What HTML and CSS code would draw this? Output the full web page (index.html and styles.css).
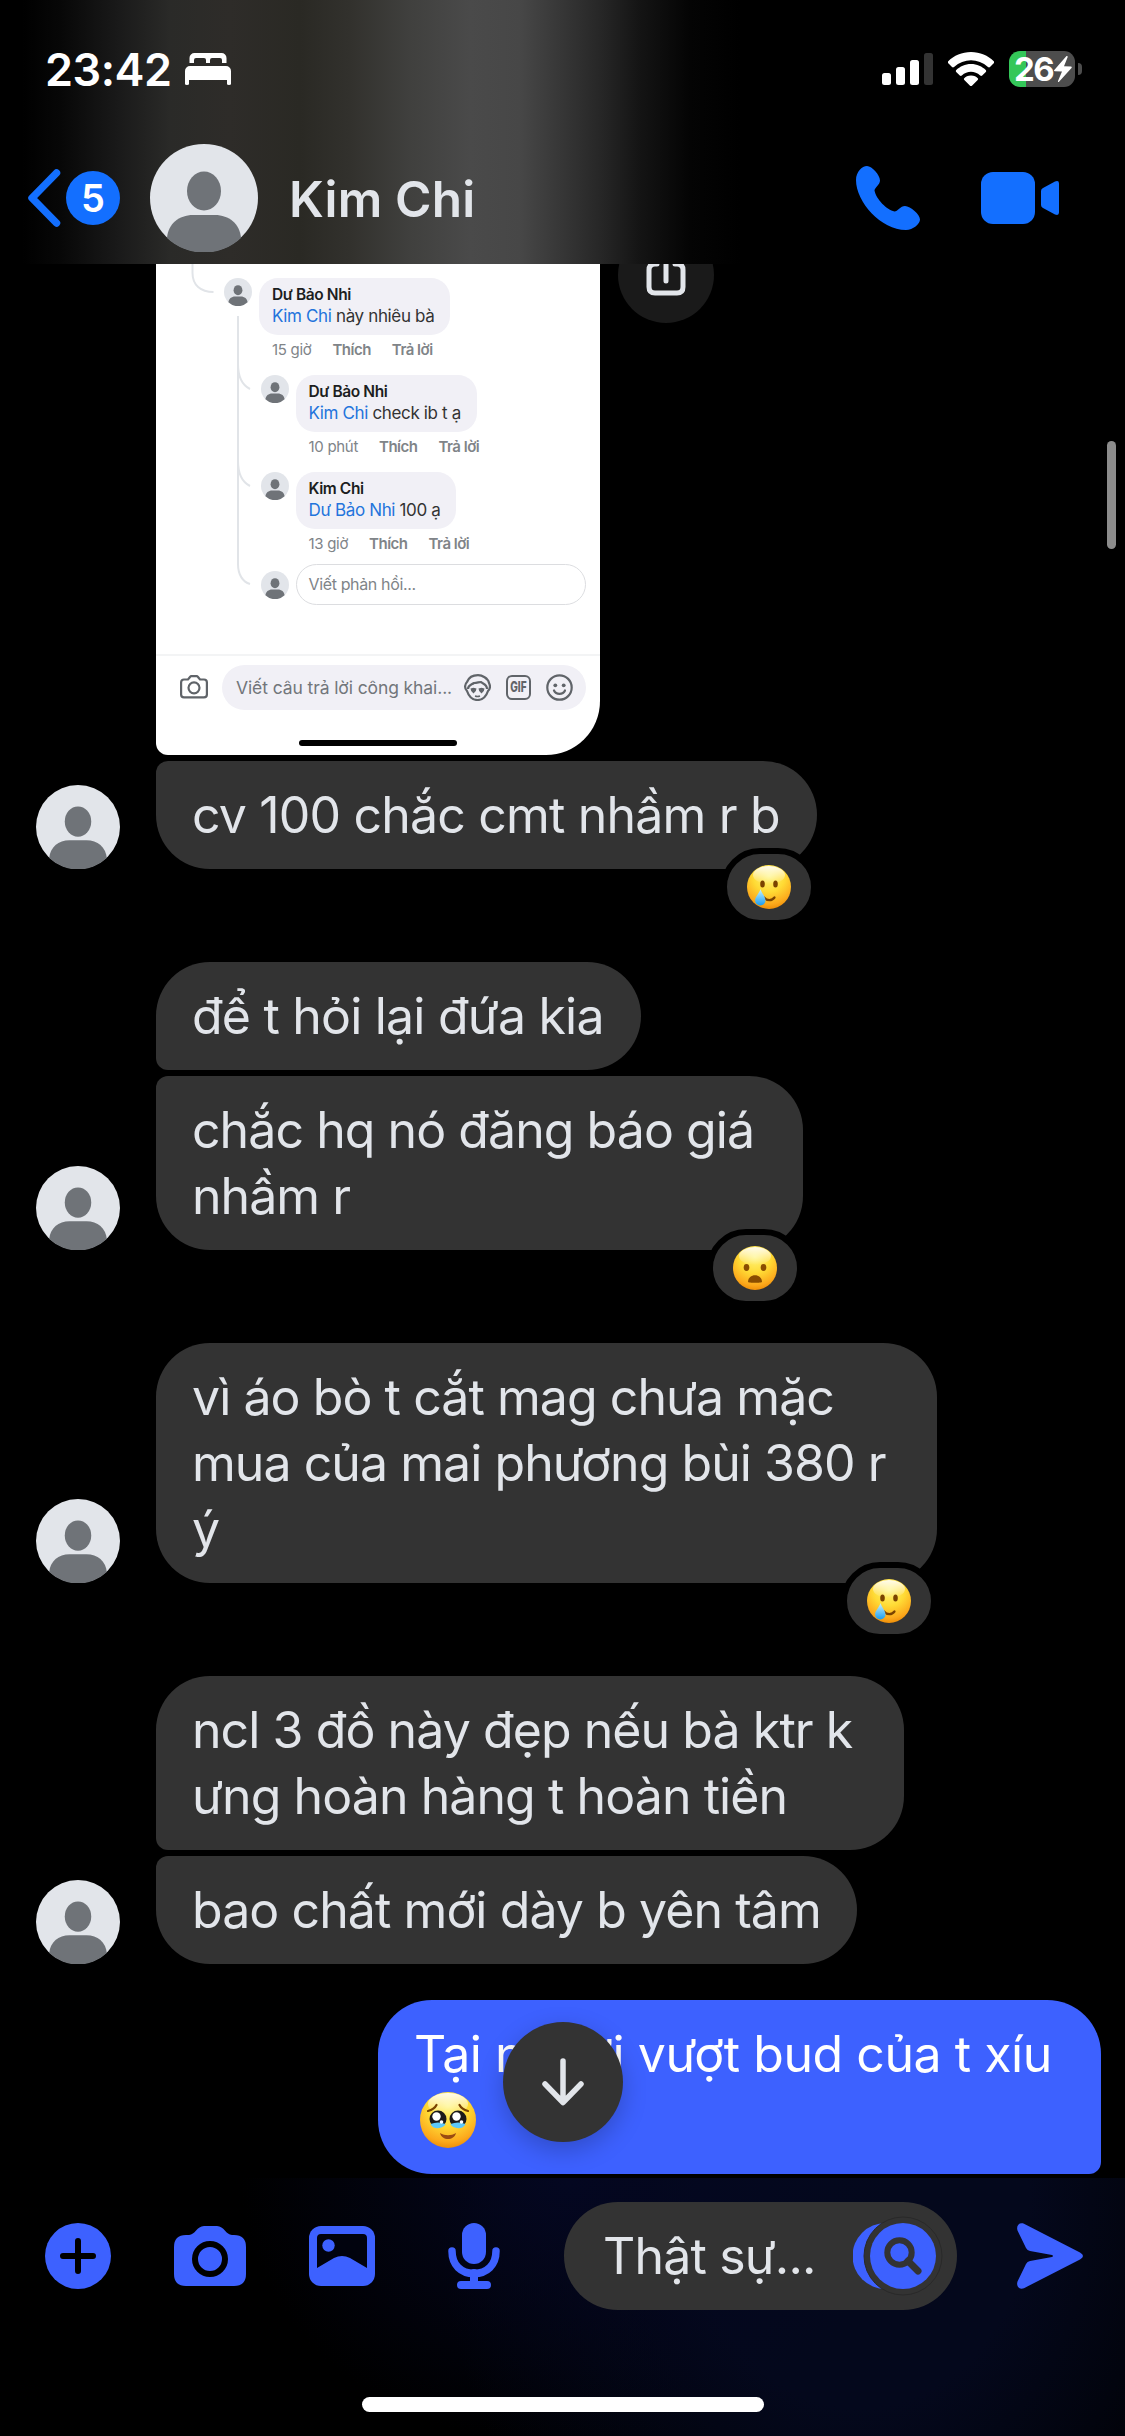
FILE: index.html
```
<!DOCTYPE html>
<html lang="vi">
<head>
<meta charset="utf-8">
<title>Kim Chi</title>
<link rel="stylesheet" href="styles.css">
</head>
<body>
<svg class="defs" width="0" height="0">
  <defs>
    <radialGradient id="face" cx=".5" cy=".25" r=".8">
      <stop offset="0" stop-color="#fff47a"/><stop offset=".45" stop-color="#ffdb35"/><stop offset=".8" stop-color="#fca91c"/><stop offset="1" stop-color="#e98300"/>
    </radialGradient>
    <linearGradient id="shine" x1="0" y1="0" x2="0" y2="1">
      <stop offset="0" stop-color="#fff" stop-opacity=".9"/><stop offset="1" stop-color="#fff" stop-opacity="0"/>
    </linearGradient>
    <linearGradient id="tear" x1="0" y1="0" x2="0" y2="1">
      <stop offset="0" stop-color="#c9f3ff"/><stop offset="1" stop-color="#1a9df0"/>
    </linearGradient>
    <symbol id="person" viewBox="0 0 108 108">
      <circle cx="54" cy="54" r="54" fill="#e2e5ea"/>
      <ellipse cx="54" cy="47" rx="17" ry="19.5" fill="#6f7378"/>
      <path d="M17 94C18 80 29 71 43 71h22c14 0 25 9 26 23A54 54 0 0 1 17 94Z" fill="#6f7378"/>
    </symbol>
    <symbol id="tearface" viewBox="0 0 44 44">
      <circle cx="22" cy="22" r="22" fill="url(#face)"/>
      <ellipse cx="22" cy="10" rx="16" ry="9" fill="url(#shine)"/>
      <ellipse cx="15.500" cy="19" rx="2.300" ry="3.600" fill="#7a4300"/>
      <ellipse cx="28.500" cy="19" rx="2.300" ry="3.600" fill="#7a4300"/>
      <path d="M17 32.500c3 3.500 8 3.500 10.500 0" fill="none" stroke="#7a4300" stroke-width="2.200" stroke-linecap="round"/>
      <path d="M13.500 24c1.500 5 5 7.500 5 11.500a5.200 5 0 0 1-10.400 0C8.100 31.500 12 29 13.500 24Z" fill="url(#tear)"/>
    </symbol>
    <symbol id="frown" viewBox="0 0 44 44">
      <circle cx="22" cy="22" r="22" fill="url(#face)"/>
      <ellipse cx="22" cy="10" rx="16" ry="9" fill="url(#shine)"/>
      <ellipse cx="13.500" cy="21.500" rx="2.800" ry="3.400" fill="#8a4d00"/>
      <ellipse cx="30.500" cy="21.500" rx="2.800" ry="3.400" fill="#8a4d00"/>
      <path d="M15 36c0-9 14-9 14 0c0 1-14 1-14 0Z" fill="#8a4d00"/>
    </symbol>
    <symbol id="holdback" viewBox="0 0 56 56">
      <circle cx="28" cy="28" r="28" fill="url(#face)"/>
      <ellipse cx="28" cy="12" rx="20" ry="11" fill="url(#shine)"/>
      <path d="M8 19c4-1 7-3 8.500-6M48 19c-4-1-7-3-8.500-6" fill="none" stroke="#7a4300" stroke-width="2.200" stroke-linecap="round"/>
      <circle cx="18" cy="27" r="8.500" fill="#1c1a1a"/><circle cx="38" cy="27" r="8.500" fill="#1c1a1a"/>
      <path d="M10.500 32c5-2 10-2 15 0c-2 5-13 6-15 0ZM30.500 32c5-2 10-2 15 0c-2 6-13 5-15 0Z" fill="#5cc8fa"/>
      <circle cx="16.500" cy="24.500" r="4.200" fill="#fff"/><circle cx="36.500" cy="24.500" r="4.200" fill="#fff"/>
      <circle cx="21.500" cy="30" r="1.800" fill="#fff"/><circle cx="41.500" cy="30" r="1.800" fill="#fff"/>
      <path d="M20 41c5 3 11 3 16 0c-2 8-14 8-16 0Z" fill="#9a4a12"/>
    </symbol>
  </defs>
</svg>

<header class="top">
  <div class="status">
    <div class="status-left">
      <span class="time">23:42</span>
      <svg width="46" height="32" viewBox="0 0 46 32" fill="#fff"><path d="M4.500 10V5a5 5 0 0 1 5-5h27a5 5 0 0 1 5 5v5H37V7a2 2 0 0 0-2-2h-8a2 2 0 0 0-2 2v3h-4V7a2 2 0 0 0-2-2h-8a2 2 0 0 0-2 2v3Z"/><path d="M0 18a5 5 0 0 1 5-5h36a5 5 0 0 1 5 5v13q0 1-2 1t-2-1v-4H4v4q0 1-2 1t-2-1Z"/></svg>
    </div>
    <div class="status-right">
      <svg width="51" height="32" viewBox="0 0 51 32" fill="#fff"><rect y="20" width="9" height="12" rx="2.500"/><rect x="14" y="14" width="9" height="18" rx="2.500"/><rect x="28" y="7" width="9" height="25" rx="2.500"/><rect x="42" width="9" height="32" rx="2.500" fill="#333"/></svg>
      <svg width="46" height="34" viewBox="0 0 46 34" fill="#fff"><path d="M23 0C32 0 40 3.500 46 9.500q.5 1-.3 1.800L42 15q-1 .8-2 0C30 6 16 6 6 15q-1 .8-2 0L.3 11.300Q-.5 10.500 0 9.500C6 3.500 14 0 23 0Z"/><path d="M23 12c6 0 11 2.500 15 6.200q.5 1-.2 1.800l-3.600 3.500q-1 .8-2 0c-5.500-5-13-5-18.400 0q-1 .8-2 0L8.200 20q-.7-.8-.2-1.800C12 14.500 17 12 23 12Z"/><path d="M23 23.500c3 0 5.500 1.200 7 3q.3.900-.3 1.600l-5.500 5.400q-1.200 1-2.400 0l-5.500-5.400q-.6-.7-.3-1.600c1.500-1.800 4-3 7-3Z"/></svg>
      <div class="battery"><span class="charge">26</span>
        <svg width="18" height="26" viewBox="0 0 18 26" fill="#fff"><path d="M12.500 0 .3 14q-.8 1.200.5 1.300L8 15.500 4 25q-.2 1.500 1 .8L17.500 12q.8-1.300-.6-1.500L10 10.300 13.700 1Q13.500-.4 12.500 0Z"/></svg>
      </div>
      <i class="nub"></i>
    </div>
  </div>
  <div class="chat-head">
    <svg class="back" width="33" height="58" viewBox="0 0 33 58"><path d="M28.500 4 4 29l24.500 25" fill="none" stroke="#136fff" stroke-width="7.500" stroke-linecap="round" stroke-linejoin="round"/></svg>
    <span class="unread">5</span>
    <svg class="head-avatar" width="108" height="108"><use href="#person"/></svg>
    <h1 class="name">Kim Chi</h1>
    <svg class="phone" width="64" height="64" viewBox="0 0 64 64" fill="#136fff"><path d="M11 0c5 0 13 9 13 14.500 0 4-5.500 7.500-5.500 10C20 33 31 44 38.500 45.500c3 0 6-5.500 10.500-5.500 5.500 0 15 8.500 15 13.500C64 58 57 64 50 64 25 64 0 36 0 14 0 6 6 0 11 0Z"/></svg>
    <svg class="video" width="78" height="52" viewBox="0 0 78 52" fill="#136fff"><rect width="54" height="52" rx="12"/><path d="M60 19q0-2 2-3L74 9.500q4-1.500 4 2v29q0 3.500-4 2L62 36q-2-1-2-3Z"/></svg>
  </div>
</header>

<main class="thread">
  <div class="shot-row">
    <div class="shot">
      <div class="comments">
        <svg class="lines" width="160" height="392" viewBox="0 0 160 392" fill="none" stroke="#e1e4e8" stroke-width="2"><path d="M36.500 0v9c0 12 8 19 21 19M82 52v248c0 11 5 18 12 20M82 100c0 13 4 21 12 25M82 197c0 13 4 21 12 25"/></svg>
        <div class="comment first">
          <svg class="mini" width="28" height="28"><use href="#person"/></svg>
          <div><div class="cbub" style="width:190.500px"><b>Dư Bảo Nhi</b><p><em>Kim Chi</em> này nhiêu bà</p></div>
          <div class="acts"><span>15 giờ</span><strong>Thích</strong><strong>Trả lời</strong></div></div>
        </div>
        <div class="comment">
          <svg class="mini" width="28" height="28"><use href="#person"/></svg>
          <div><div class="cbub" style="width:181.500px"><b>Dư Bảo Nhi</b><p><em>Kim Chi</em> check ib t ạ</p></div>
          <div class="acts"><span>10 phút</span><strong>Thích</strong><strong>Trả lời</strong></div></div>
        </div>
        <div class="comment">
          <svg class="mini" width="28" height="28"><use href="#person"/></svg>
          <div><div class="cbub" style="width:160.500px"><b>Kim Chi</b><p><em>Dư Bảo Nhi</em> 100 ạ</p></div>
          <div class="acts"><span>13 giờ</span><strong>Thích</strong><strong>Trả lời</strong></div></div>
        </div>
        <div class="reply">
          <svg class="mini" width="28" height="28"><use href="#person"/></svg>
          <div class="reply-box">Viết phản hồi...</div>
        </div>
      </div>
      <div class="public">
        <svg width="28" height="24" viewBox="0 0 28 24" fill="none" stroke="#606469" stroke-width="2.200"><path d="M4 4.500h4L10 2q.5-.8 1.500-.8h5q1 0 1.500.8l2 2.500h4q2.900 0 2.900 2.900v12q0 2.900-2.900 2.900H4q-2.900 0-2.900-2.900v-12Q1.100 4.500 4 4.500Z"/><circle cx="14" cy="12.800" r="5.500"/></svg>
        <div class="public-box"><span>Viết câu trả lời công khai...</span>
          <svg width="27" height="27" viewBox="0 0 27 27" fill="none" stroke="#606469" stroke-width="2.200"><path d="M3 17C0 14 1 10 3 8 5 3 10 1.200 14 1.200S24 4 25 9c1.500 3 1 6-1 8-2 6-6 9-10.500 9S5 23 3 17Z"/><path d="M4 15c0-4 3-4 6-6 3 0 5-1 7-1 2 2 6 2 6 7" /><path d="m6.500 14.500 3-.8 3 .8q0 3-3 5-3-2-3-5Zm8 0 3-.8 3 .8q0 3-3 5-3-2-3-5Z" fill="#606469" stroke="none"/><path d="M11 22q2.500 1 5 0" stroke-width="1.500"/></svg>
          <span class="gif"><span>GIF</span></span>
          <svg width="27" height="27" viewBox="0 0 27 27" fill="none" stroke="#606469" stroke-width="2.200"><circle cx="13.500" cy="13.500" r="12.200"/><path d="M8 16.500c2 4.500 9 4.500 11 0" stroke-linecap="round"/><g fill="#606469" stroke="none"><circle cx="9.300" cy="11.300" r="1.900"/><circle cx="17.700" cy="11.300" r="1.900"/></g></svg>
        </div>
      </div>
      <i class="shot-home"></i>
    </div>
    <div class="share"><svg width="40" height="50" viewBox="0 0 40 50" fill="none" stroke="#e2e5ea" stroke-width="5" stroke-linecap="round"><path d="M11 17H9q-6 0-6 6v17q0 6 6 6h22q6 0 6-6V23q0-6-6-6h-2M20 34V5"/></svg></div>
  </div>

  <div class="row"><svg class="avatar" width="84" height="84"><use href="#person"/></svg>
    <div class="bubble join-top ls82" style="width:661px">cv 100 chắc cmt nhầm r b<span class="react"><svg width="44" height="44"><use href="#tearface"/></svg></span></div></div>
  <div class="row apart"><i class="avatar"></i>
    <div class="bubble join-bottom ls80" style="width:485px">để t hỏi lại đứa kia</div></div>
  <div class="row"><svg class="avatar" width="84" height="84"><use href="#person"/></svg>
    <div class="bubble join-top ls94" style="width:647px">chắc hq nó đăng báo giá<br>nhầm r<span class="react"><svg width="44" height="44"><use href="#frown"/></svg></span></div></div>
  <div class="row apart"><svg class="avatar" width="84" height="84"><use href="#person"/></svg>
    <div class="bubble ls94" style="width:781px">vì áo bò t cắt mag chưa mặc<br>mua của mai phương bùi 380 r<br>ý<span class="react"><svg width="44" height="44"><use href="#tearface"/></svg></span></div></div>
  <div class="row apart"><i class="avatar"></i>
    <div class="bubble join-bottom ls92" style="width:748px">ncl 3 đồ này đẹp nếu bà ktr k<br>ưng hoàn hàng t hoàn tiền</div></div>
  <div class="row"><svg class="avatar" width="84" height="84"><use href="#person"/></svg>
    <div class="bubble join-top ls92" style="width:701px">bao chất mới dày b yên tâm</div></div>
  <div class="row mine">
    <div class="bubble sent">Tại người vượt bud của t xíu<br><svg class="emoji" width="56" height="56"><use href="#holdback"/></svg></div></div>

  <div class="to-bottom"><svg width="44" height="48" viewBox="0 0 44 48" fill="none" stroke="#e2e5ea" stroke-width="5.500" stroke-linecap="round" stroke-linejoin="round"><path d="M22 3v40M4 26l18 18.500L40 26"/></svg></div>
  <i class="scrollbar"></i>
</main>

<footer class="composer">
  <div class="tools">
    <svg width="66" height="66" viewBox="0 0 66 66"><circle cx="33" cy="33" r="33" fill="#3d61ff"/><path d="M33 18v30M18 33h30" stroke="#000" stroke-width="6" stroke-linecap="round"/></svg>
    <svg class="cam" width="72" height="60" viewBox="0 0 72 60"><path d="M12 9h3c6 0 8-9 15-9h13c7 0 9 9 15 9h2q12 0 12 12v27q0 12-12 12H12Q0 60 0 48V21Q0 9 12 9Z" fill="#3d61ff"/><circle cx="36" cy="33" r="15" fill="none" stroke="#000" stroke-width="6"/></svg>
    <svg class="pic" width="66" height="60" viewBox="0 0 66 60"><rect width="66" height="60" rx="12" fill="#3d61ff"/><path d="M8 12q0-4 4-4h42q4 0 4 4v30L41 32q-8-4-16 0L8 42Z" fill="#01030e"/><circle cx="19.500" cy="19.500" r="6.200" fill="#3d61ff"/></svg>
    <svg class="mic" width="52" height="66" viewBox="0 0 52 66" fill="none" stroke="#3d61ff"><rect x="14" width="24" height="41" rx="12" fill="#3d61ff" stroke="none"/><path d="M4 28c0 14 9 22.500 22 22.500S48 42 48 28" stroke-width="7.500" stroke-linecap="round"/><path d="M26 50v12M13 62h26" stroke-width="8" stroke-linecap="round"/></svg>
    <div class="field"><span>Thật sự...</span>
      <svg width="92" height="80" viewBox="0 0 92 80"><circle cx="32.500" cy="40" r="33" fill="#3d61ff"/><circle cx="50" cy="40" r="39" fill="#333" stroke="#292929"/><circle cx="50" cy="40" r="33" fill="#3d61ff"/><circle cx="46.500" cy="36.500" r="12.200" fill="none" stroke="#333" stroke-width="6"/><path d="m55 45 10 10" stroke="#333" stroke-width="7" stroke-linecap="round"/></svg>
    </div>
    <svg class="send" width="66" height="66" viewBox="0 0 66 66" fill="#3d61ff"><path d="M7 .8 63 29.500q6 3.500 0 7L7 65.200C2 67 -1 63 .5 58.500L9 41q1.200-2.500 4-3l22-4q2-1 0-2l-22-4q-2.800-.5-4-3L.5 7.500C-1 3 2-1 7 .8Z"/></svg>
  </div>
  <i class="home"></i>
</footer>
</body>
</html>
```
FILE: styles.css
```
* { box-sizing: border-box; margin: 0; padding: 0; }
body {
  width: 1125px; height: 2436px; overflow: hidden;
  display: flex; flex-direction: column;
  background: #000; color: #e2e5ea;
  font-family: "Inter", "Liberation Sans", sans-serif;
}
svg { display: block; flex: none; }
i { display: block; }
.defs { position: absolute; }

/* Header */
.top {
  flex: none; height: 264px;
  background: linear-gradient(90deg, #000 2%, #070707 60px, #1a1a1a 120px, #2a2a28 170px, #2e2c29 230px, #2a2924 300px, #32312d 350px, #40403e 410px, #4a4a4a 470px, #474747 520px, #373737 560px, #262626 602px, #141414 640px, #040404 690px, #000 740px);
}
.status { height: 138px; padding: 0 43px 0 45px; display: flex; align-items: center; justify-content: space-between; }
.status-left { display: flex; align-items: center; gap: 15px; }
.time { width: 125px; font-size: 45px; font-weight: 600; letter-spacing: -.5px; color: #fff; white-space: nowrap; }
.status-right { display: flex; align-items: center; }
.status-right > svg { margin-right: 15px; }
.battery {
  width: 66px; height: 36px; border-radius: 11px; padding-left: 5px;
  display: flex; align-items: center;
  background: linear-gradient(90deg, #34c759 17px, #4d4d4d 17px);
}
.charge { width: 40px; font-size: 33px; font-weight: 700; letter-spacing: -1.500px; color: #fff; line-height: 36px; }
.nub { width: 4px; height: 12px; margin-left: 3px; border-radius: 0 6px 6px 0; background: #4d4d4d; }
.chat-head { height: 120px; padding: 0 66px 0 28px; display: flex; align-items: center; }
.unread {
  width: 54px; height: 54px; margin-left: 5px; border-radius: 27px;
  background: #136fff; color: #fff; text-align: center; font-size: 38px; font-weight: 600; line-height: 54px;
}
.head-avatar { margin-left: 30px; }
.name { margin-left: 31px; font-size: 49.500px; font-weight: 600; letter-spacing: .2px; line-height: 60px; padding-top: 1px; }
.phone { margin-left: auto; }
.video { margin-left: 61px; }

/* Messages */
.thread { flex: none; height: 1914px; position: relative; overflow: hidden; }
.shot-row { height: 491px; margin-left: 156px; display: flex; align-items: flex-start; gap: 18px; }
.shot { width: 444px; height: 491px; background: #fff; color: #1c1e21; border-radius: 0 0 54px 12px; overflow: hidden; }
.share {
  width: 96px; height: 96px; margin-top: -37px; border-radius: 50%; background: #1a1a1a;
  display: flex; align-items: center; justify-content: center;
}
.share svg { margin-top: -6px; }
.comments { position: relative; height: 392px; padding-top: 14px; border-bottom: 2px solid #f3f4f5; }
.lines { position: absolute; left: 0; top: 0; }
.comment { position: relative; height: 97px; margin-left: 104.500px; display: flex; align-items: flex-start; gap: 7px; }
.comment.first { margin-left: 68px; }
.cbub { height: 57px; padding: 7px 13px; border-radius: 19px; background: #f1f0f6; white-space: nowrap; }
.cbub b { display: block; font-size: 15.500px; font-weight: 600; line-height: 20px; letter-spacing: -.4px; }
.cbub p { font-size: 17px; line-height: 22px; letter-spacing: -.36px; color: #333; }
.cbub em { font-style: normal; color: #2374dc; }
.acts { display: flex; gap: 21px; margin: 5px 0 0 13px; font-size: 15px; line-height: 20px; letter-spacing: -.3px; color: #808488; white-space: nowrap; }
.acts strong { font-weight: 600; letter-spacing: -.5px; }
.reply { position: relative; margin: -5px 14px 0 104.500px; display: flex; align-items: center; gap: 7px; }
.reply-box { flex: 1; height: 41px; border: 1.500px solid #dcdde0; border-radius: 21px; padding-left: 12px; font-size: 16px; line-height: 39px; letter-spacing: -.36px; color: #808488; }
.public { height: 62px; padding: 0 14px 0 24px; display: flex; align-items: center; gap: 14px; }
.public-box {
  flex: 1; height: 45px; padding: 0 13px 0 14px; border-radius: 23px; background: #f1f0f6;
  display: flex; align-items: center; font-size: 17.500px; letter-spacing: -.1px; color: #72767b; white-space: nowrap;
}
.public-box svg:nth-child(2) { margin-left: auto; }
.gif {
  width: 25px; height: 25px; margin: 0 15px; border: 2.200px solid #606469; border-radius: 6px;
  display: flex; align-items: center; justify-content: center;
  font-size: 14px; font-weight: 800; line-height: 20px; letter-spacing: 0; color: #606469;
}
.gif span { transform: scaleX(.72); }
.shot-home { width: 158px; height: 6px; margin: 22px 0 0 143px; border-radius: 3px; background: #000; }

.row { display: flex; align-items: flex-end; gap: 36px; margin: 6px 0 0 36px; }
.row.apart { margin-top: 93px; }
.avatar { width: 84px; flex: none; }
.bubble {
  position: relative; flex: none; padding: 21px 0 21px 36px; border-radius: 54px;
  background: #333; font-size: 50px; line-height: 66px; letter-spacing: -.82px; white-space: nowrap;
}
.join-top { border-top-left-radius: 12px; }
.join-bottom { border-bottom-left-radius: 12px; }
.ls80 { letter-spacing: -.8px; }
.ls92 { letter-spacing: -.92px; }
.ls94 { letter-spacing: -.94px; }
.react {
  position: absolute; right: 0; bottom: -57px; width: 96px; height: 78px;
  border: 6px solid #000; border-radius: 39px; background: #333;
  display: flex; align-items: center; justify-content: center;
}
.mine { margin: 36px 24px 0 0; justify-content: flex-end; }
.sent { width: 723px; height: 174px; border-bottom-right-radius: 12px; background: #3d61ff; color: #fff; letter-spacing: -.45px; }
.emoji { margin: 5px 0 0 6px; }
.to-bottom {
  position: absolute; left: 503px; top: 1758px; width: 120px; height: 120px; border-radius: 50%;
  background: #333; box-shadow: 0 8px 24px rgba(0, 0, 0, .22);
  display: flex; align-items: center; justify-content: center;
}
.scrollbar { position: absolute; left: 1107px; top: 177px; width: 9px; height: 108px; border-radius: 5px; background: #8c8c8c; }

/* Composer */
.composer {
  flex: 1; padding-top: 24px;
  background: radial-gradient(ellipse 330px 270px at 570px 0, #040721, transparent), radial-gradient(ellipse 420px 500px at 860px 30px, #04081c 40%, transparent);
}
.tools { height: 108px; padding: 0 42px 0 45px; display: flex; align-items: center; }
.cam { margin-left: 63px; }
.pic { margin-left: 63px; }
.mic { margin-left: 73px; }
.field {
  width: 393px; height: 108px; margin-left: 64px; padding: 0 12px 0 39px; border-radius: 54px; background: #333;
  display: flex; align-items: center; justify-content: space-between; font-size: 50px; letter-spacing: -.84px; white-space: nowrap;
}
.send { margin-left: auto; }
.home { width: 402px; height: 15px; margin: 87px auto 0; border-radius: 8px; background: #fff; }
```
